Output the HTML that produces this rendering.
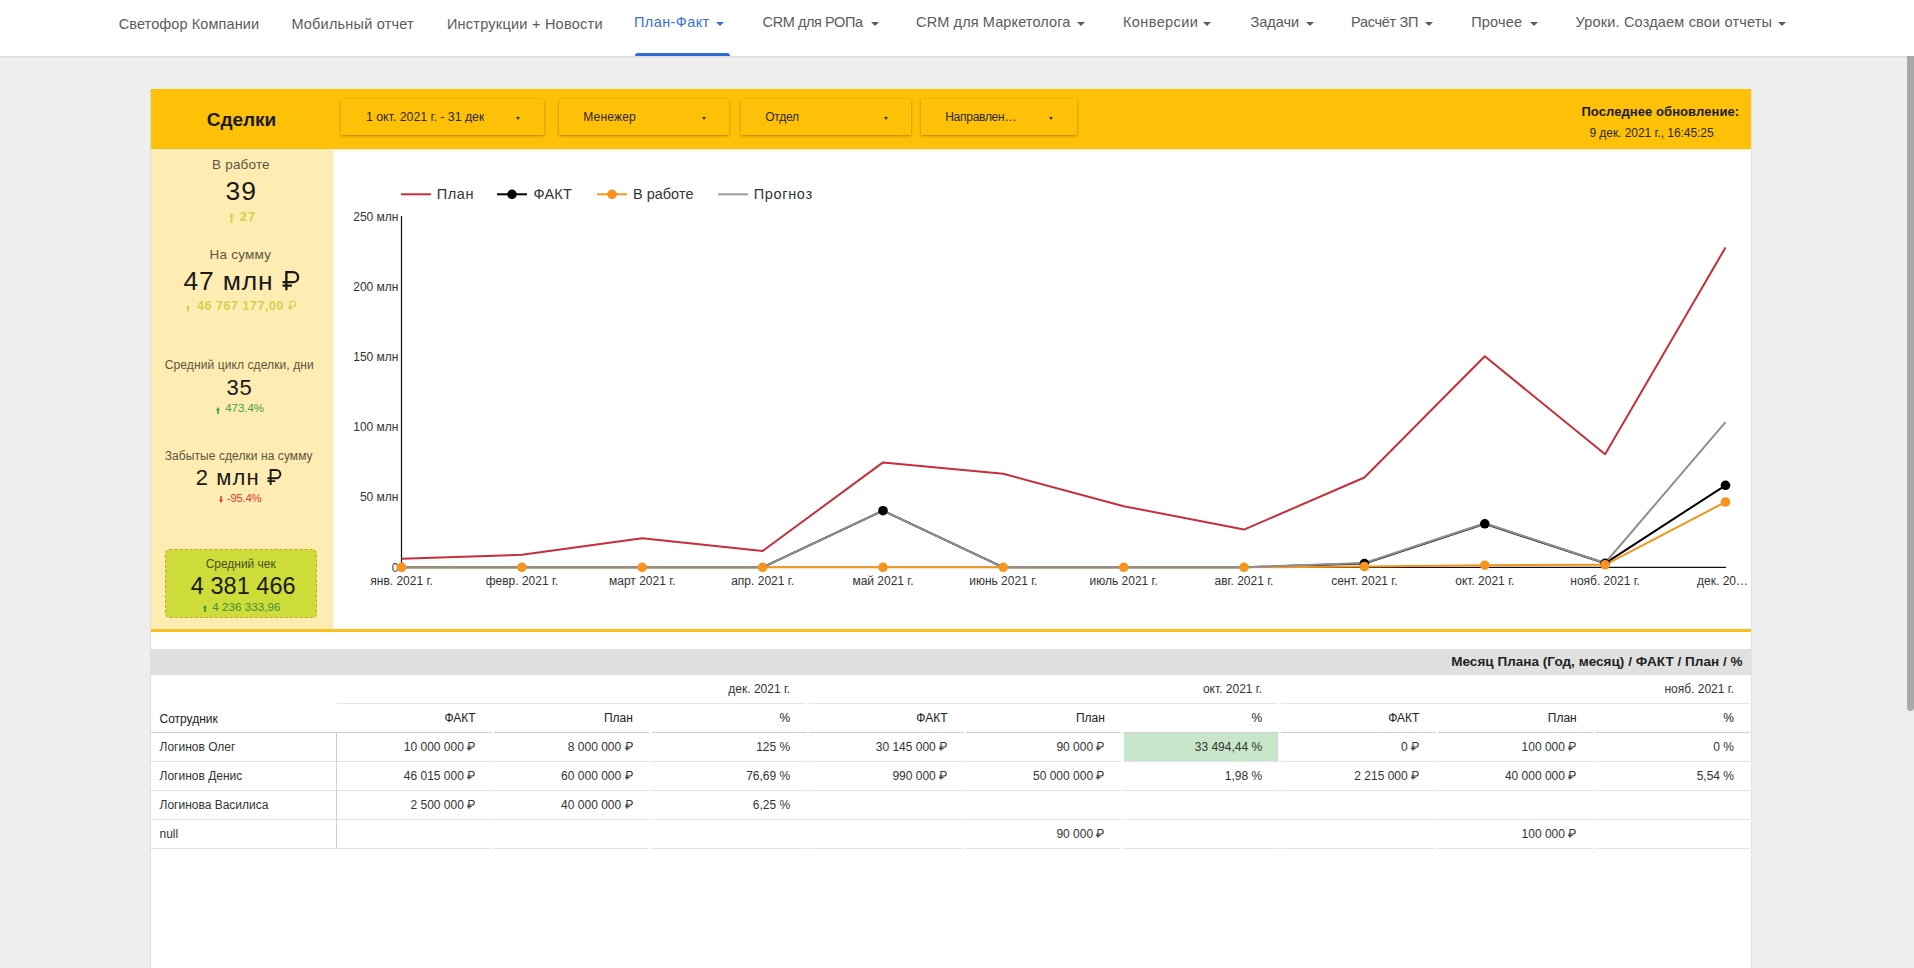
<!DOCTYPE html>
<html><head><meta charset="utf-8"><title>План-Факт</title>
<style>
html,body{margin:0;padding:0;}
body{width:1914px;height:968px;overflow:hidden;position:relative;background:#eeeeee;font-family:"Liberation Sans", sans-serif;}
.t{position:absolute;white-space:nowrap;line-height:1;}
svg text{font-family:"Liberation Sans", sans-serif;}
.caret{position:absolute;width:0;height:0;border-left:4px solid transparent;border-right:4px solid transparent;border-top:4.5px solid #5b5b5b;}
.caret.sm{border-left-width:2.5px;border-right-width:2.5px;border-top-width:3px;border-top-color:#333;}
.rub{display:inline-block;width:0.7em;height:0.729em;vertical-align:baseline;overflow:visible;}

</style></head><body>
<div style="position:absolute;left:0px;top:0px;width:1914px;height:56px;background:#fff;"></div>
<div style="position:absolute;left:0px;top:56px;width:1914px;height:1px;background:#dadada;"></div>
<div style="position:absolute;left:0px;top:57px;width:1914px;height:1px;background:#e6e6e6;"></div>
<div class="t" style="left:118.70px;top:16.63px;font-size:14.5px;color:#5b5b5b;font-weight:normal;letter-spacing:0.098px;">Светофор Компании</div>
<div class="t" style="left:291.40px;top:16.63px;font-size:14.5px;color:#5b5b5b;font-weight:normal;letter-spacing:0.207px;">Мобильный отчет</div>
<div class="t" style="left:446.90px;top:16.63px;font-size:14.5px;color:#5b5b5b;font-weight:normal;letter-spacing:0.243px;">Инструкции + Новости</div>
<div class="t" style="left:634.00px;top:14.73px;font-size:14.5px;color:#3b6fd4;font-weight:normal;letter-spacing:0.403px;">План-Факт</div>
<div class="caret" style="left:716.4px;top:22px;border-top-color:#3b6fd4"></div>
<div class="t" style="left:762.60px;top:14.73px;font-size:14.5px;color:#5b5b5b;font-weight:normal;letter-spacing:-0.419px;">CRM для РОПа</div>
<div class="caret" style="left:871.2px;top:22px;border-top-color:#5b5b5b"></div>
<div class="t" style="left:916.10px;top:14.73px;font-size:14.5px;color:#5b5b5b;font-weight:normal;letter-spacing:0.112px;">CRM для Маркетолога</div>
<div class="caret" style="left:1077.0px;top:22px;border-top-color:#5b5b5b"></div>
<div class="t" style="left:1123.00px;top:14.73px;font-size:14.5px;color:#5b5b5b;font-weight:normal;letter-spacing:0.395px;">Конверсии</div>
<div class="caret" style="left:1203.4px;top:22px;border-top-color:#5b5b5b"></div>
<div class="t" style="left:1250.60px;top:14.73px;font-size:14.5px;color:#5b5b5b;font-weight:normal;letter-spacing:-0.057px;">Задачи</div>
<div class="caret" style="left:1305.5px;top:22px;border-top-color:#5b5b5b"></div>
<div class="t" style="left:1351.00px;top:14.73px;font-size:14.5px;color:#5b5b5b;font-weight:normal;letter-spacing:-0.298px;">Расчёт ЗП</div>
<div class="caret" style="left:1425.0px;top:22px;border-top-color:#5b5b5b"></div>
<div class="t" style="left:1471.20px;top:14.73px;font-size:14.5px;color:#5b5b5b;font-weight:normal;letter-spacing:0.190px;">Прочее</div>
<div class="caret" style="left:1529.5px;top:22px;border-top-color:#5b5b5b"></div>
<div class="t" style="left:1575.60px;top:14.73px;font-size:14.5px;color:#5b5b5b;font-weight:normal;letter-spacing:0.171px;">Уроки. Создаем свои отчеты</div>
<div class="caret" style="left:1777.6px;top:22px;border-top-color:#5b5b5b"></div>
<div style="position:absolute;left:635px;top:53px;width:95px;height:3px;background:#2f6bd8;border-radius:3px 3px 0 0;"></div>
<div style="position:absolute;left:1907px;top:56px;width:7px;height:655px;background:#a9a9a9;border-radius:0 0 4px 4px;"></div>
<div style="position:absolute;left:150px;top:89px;width:1px;height:879px;background:#dcdcdc;"></div>
<div style="position:absolute;left:1751px;top:89px;width:1px;height:879px;background:#e2e2e2;"></div>
<div style="position:absolute;left:151px;top:89px;width:1600px;height:879px;background:#fff;"></div>
<div style="position:absolute;left:151px;top:89px;width:1600px;height:60px;background:#ffc107;"></div>
<div style="position:absolute;left:151px;top:148px;width:1600px;height:1px;background:#eebb20;"></div>
<div style="position:absolute;left:151px;top:149px;width:182px;height:480px;background:#ffecb3;"></div>
<div style="position:absolute;left:333px;top:149px;width:1418px;height:2px;background:#fff6d0;"></div>
<div style="position:absolute;left:151px;top:629px;width:1600px;height:3px;background:#f9bf1d;"></div>
<div class="t" style="left:206.80px;top:109.52px;font-size:19px;color:#1a1a1a;font-weight:bold;letter-spacing:-0.046px;">Сделки</div>
<div style="position:absolute;left:341px;top:99px;width:203px;height:35.5px;background:#ffc107;box-shadow:0 1.2px 2.5px rgba(0,0,0,0.3), 0 0 1px rgba(0,0,0,0.12);"></div>
<div class="t" style="left:366.00px;top:110.59px;font-size:12.3px;color:#2a2a2a;font-weight:normal;width:118.0px;overflow:hidden;">1 окт. 2021 г. - 31 дек</div>
<div class="caret sm" style="left:516.0px;top:117px;"></div>
<div style="position:absolute;left:559px;top:99px;width:170px;height:35.5px;background:#ffc107;box-shadow:0 1.2px 2.5px rgba(0,0,0,0.3), 0 0 1px rgba(0,0,0,0.12);"></div>
<div class="t" style="left:583.30px;top:110.84px;font-size:12px;color:#2a2a2a;font-weight:normal;letter-spacing:0.171px;">Менежер</div>
<div class="caret sm" style="left:701.5px;top:117px;"></div>
<div style="position:absolute;left:741px;top:99px;width:170px;height:35.5px;background:#ffc107;box-shadow:0 1.2px 2.5px rgba(0,0,0,0.3), 0 0 1px rgba(0,0,0,0.12);"></div>
<div class="t" style="left:765.30px;top:110.84px;font-size:12px;color:#2a2a2a;font-weight:normal;letter-spacing:-0.277px;">Отдел</div>
<div class="caret sm" style="left:883.5px;top:117px;"></div>
<div style="position:absolute;left:921px;top:99px;width:156px;height:35.5px;background:#ffc107;box-shadow:0 1.2px 2.5px rgba(0,0,0,0.3), 0 0 1px rgba(0,0,0,0.12);"></div>
<div class="t" style="left:945.20px;top:110.84px;font-size:12px;color:#2a2a2a;font-weight:normal;letter-spacing:-0.265px;">Направлен…</div>
<div class="caret sm" style="left:1049.0px;top:117px;"></div>
<div class="t" style="left:1581.40px;top:105.30px;font-size:13px;color:#1a1a1a;font-weight:bold;letter-spacing:0.079px;">Последнее обновление:</div>
<div class="t" style="left:1589.40px;top:126.54px;font-size:12px;color:#2a2a2a;font-weight:normal;letter-spacing:-0.043px;">9 дек. 2021 г., 16:45:25</div>
<div class="t" style="left:212.10px;top:158.47px;font-size:13.5px;color:#5c5640;font-weight:normal;letter-spacing:0.179px;">В работе</div>
<div class="t" style="left:225.50px;top:178.17px;font-size:26.5px;color:#1a1a1a;font-weight:normal;letter-spacing:1.062px;">39</div>
<div class="t" style="left:239.80px;top:210.00px;font-size:13px;color:#cfd34e;font-weight:bold;letter-spacing:0.870px;">27</div>
<svg style="position:absolute;left:228.5px;top:213px" width="5" height="10" viewBox="0 0 5 10"><path d="M2.5 0 L5 3.5 L3.5 3.5 L3.5 10 L1.5 10 L1.5 3.5 L0 3.5 Z" fill="#cfd34e"/></svg>
<div class="t" style="left:209.50px;top:248.37px;font-size:13.5px;color:#5c5640;font-weight:normal;letter-spacing:0.233px;">На сумму</div>
<div class="t" style="left:183.60px;top:267.97px;font-size:26.5px;color:#1a1a1a;font-weight:normal;letter-spacing:0.769px;">47 млн <svg class="rub" viewBox="0 0 700 729"><path d="M165 0V729M165 42.5H417.5A190 190 0 0 1 417.5 423H20M20 552H375" fill="none" stroke="currentColor" stroke-width="88"/></svg></div>
<div class="t" style="left:196.90px;top:299.62px;font-size:12.5px;color:#cfd34e;font-weight:bold;letter-spacing:0.549px;">46 767 177,00 <svg class="rub" viewBox="0 0 700 729"><path d="M165 0V729M165 42.5H417.5A190 190 0 0 1 417.5 423H20M20 552H375" fill="none" stroke="currentColor" stroke-width="88"/></svg></div>
<svg style="position:absolute;left:186px;top:304.5px" width="4" height="7" viewBox="0 0 4 7"><path d="M2.0 0 L4 3.15 L2.8 3.15 L2.8 7 L1.2 7 L1.2 3.15 L0 3.15 Z" fill="#cfd34e"/></svg>
<div class="t" style="left:164.80px;top:359.34px;font-size:12px;color:#5c5640;font-weight:normal;letter-spacing:0.098px;">Средний цикл сделки, дни</div>
<div class="t" style="left:226.50px;top:376.68px;font-size:22px;color:#1a1a1a;font-weight:normal;letter-spacing:0.665px;">35</div>
<div class="t" style="left:225.20px;top:402.87px;font-size:11.5px;color:#43a047;font-weight:normal;letter-spacing:-0.036px;">473.4%</div>
<svg style="position:absolute;left:216px;top:406.5px" width="4" height="7" viewBox="0 0 4 7"><path d="M2.0 0 L4 3.15 L2.8 3.15 L2.8 7 L1.2 7 L1.2 3.15 L0 3.15 Z" fill="#43a047"/></svg>
<div class="t" style="left:164.80px;top:449.54px;font-size:12px;color:#5c5640;font-weight:normal;letter-spacing:0.070px;">Забытые сделки на сумму</div>
<div class="t" style="left:195.70px;top:467.08px;font-size:22px;color:#1a1a1a;font-weight:normal;letter-spacing:1.138px;">2 млн <svg class="rub" viewBox="0 0 700 729"><path d="M165 0V729M165 42.5H417.5A190 190 0 0 1 417.5 423H20M20 552H375" fill="none" stroke="currentColor" stroke-width="88"/></svg></div>
<div class="t" style="left:226.90px;top:492.87px;font-size:11.5px;color:#e53935;font-weight:normal;letter-spacing:-0.302px;">-95.4%</div>
<svg style="position:absolute;left:218.5px;top:495.5px" width="4" height="7" viewBox="0 0 4 7"><path d="M2.0 7 L4 3.85 L2.8 3.85 L2.8 0 L1.2 0 L1.2 3.85 L0 3.85 Z" fill="#e53935"/></svg>
<svg style="position:absolute;left:165px;top:549px" width="152" height="69"><rect x="0.5" y="0.5" width="151" height="68" rx="4" fill="#cddc39" stroke="#c2a92a" stroke-width="1" stroke-dasharray="3 2"/></svg>
<div class="t" style="left:205.70px;top:558.24px;font-size:12px;color:#4a5020;font-weight:normal;letter-spacing:-0.034px;">Средний чек</div>
<div class="t" style="left:190.80px;top:575.01px;font-size:23.5px;color:#1a1a1a;font-weight:normal;letter-spacing:0.028px;">4 381 466</div>
<div class="t" style="left:212.20px;top:601.87px;font-size:11.5px;color:#3e8e3a;font-weight:normal;letter-spacing:0.104px;">4 236 333,96</div>
<svg style="position:absolute;left:203.4px;top:604.5px" width="4" height="7" viewBox="0 0 4 7"><path d="M2.0 0 L4 3.15 L2.8 3.15 L2.8 7 L1.2 7 L1.2 3.15 L0 3.15 Z" fill="#3e8e3a"/></svg>
<div class="t" style="left:436.80px;top:187.43px;font-size:14.5px;color:#333;font-weight:normal;letter-spacing:0.551px;">План</div>
<div class="t" style="left:533.50px;top:187.43px;font-size:14.5px;color:#333;font-weight:normal;letter-spacing:0.192px;">ФАКТ</div>
<div class="t" style="left:632.90px;top:187.43px;font-size:14.5px;color:#333;font-weight:normal;letter-spacing:0.020px;">В работе</div>
<div class="t" style="left:753.70px;top:187.43px;font-size:14.5px;color:#333;font-weight:normal;letter-spacing:0.659px;">Прогноз</div>
<svg style="position:absolute;left:333px;top:151px" width="1418" height="478" viewBox="333 151 1418 478"><line x1="401.5" y1="216" x2="401.5" y2="567.3" stroke="#111" stroke-width="1.2"/><line x1="401.5" y1="567.3" x2="1726" y2="567.3" stroke="#111" stroke-width="1.2"/><text x="398.5" y="220.6" text-anchor="end" font-size="12" fill="#333">250 млн</text><text x="398.5" y="290.8" text-anchor="end" font-size="12" fill="#333">200 млн</text><text x="398.5" y="361.0" text-anchor="end" font-size="12" fill="#333">150 млн</text><text x="398.5" y="431.2" text-anchor="end" font-size="12" fill="#333">100 млн</text><text x="398.5" y="501.4" text-anchor="end" font-size="12" fill="#333">50 млн</text><text x="398.5" y="571.6" text-anchor="end" font-size="12" fill="#333">0</text><text x="401.5" y="585" text-anchor="middle" font-size="12" fill="#333">янв. 2021 г.</text><text x="521.9" y="585" text-anchor="middle" font-size="12" fill="#333">февр. 2021 г.</text><text x="642.2" y="585" text-anchor="middle" font-size="12" fill="#333">март 2021 г.</text><text x="762.6" y="585" text-anchor="middle" font-size="12" fill="#333">апр. 2021 г.</text><text x="883.0" y="585" text-anchor="middle" font-size="12" fill="#333">май 2021 г.</text><text x="1003.3" y="585" text-anchor="middle" font-size="12" fill="#333">июнь 2021 г.</text><text x="1123.7" y="585" text-anchor="middle" font-size="12" fill="#333">июль 2021 г.</text><text x="1244.0" y="585" text-anchor="middle" font-size="12" fill="#333">авг. 2021 г.</text><text x="1364.4" y="585" text-anchor="middle" font-size="12" fill="#333">сент. 2021 г.</text><text x="1484.8" y="585" text-anchor="middle" font-size="12" fill="#333">окт. 2021 г.</text><text x="1605.1" y="585" text-anchor="middle" font-size="12" fill="#333">нояб. 2021 г.</text><text x="1748" y="585" text-anchor="end" font-size="12" fill="#333">дек. 20…</text><polyline points="401.5,558.7 521.9,554.8 642.2,538.3 762.6,551.0 883.0,462.4 1003.3,473.8 1123.7,506.2 1244.0,529.6 1364.4,477.5 1484.8,356.3 1605.1,454.3 1725.5,247.5" fill="none" stroke="#c62f3a" stroke-width="2" stroke-linejoin="round"/><polyline points="401.5,567.3 521.9,567.3 642.2,567.3 762.6,567.3 883.0,510.7 1003.3,567.3 1123.7,567.3 1244.0,567.3 1364.4,563.6 1484.8,523.8 1605.1,563.3 1725.5,485.3" fill="none" stroke="#000" stroke-width="2" stroke-linejoin="round"/><polyline points="401.5,567.3 521.9,567.3 642.2,567.3 762.6,567.3 883.0,567.3 1003.3,567.3 1123.7,567.3 1244.0,567.3 1364.4,566.5 1484.8,565.2 1605.1,564.8 1725.5,502.0" fill="none" stroke="#f7941d" stroke-width="2" stroke-linejoin="round"/><polyline points="401.5,567.3 521.9,567.3 642.2,567.3 762.6,567.3 883.0,510.7 1003.3,567.3 1123.7,567.3 1244.0,567.3 1364.4,563.0 1484.8,523.3 1605.1,563.0 1725.5,422.2" fill="none" stroke="#8f8f8f" stroke-width="2" stroke-linejoin="round"/><circle cx="883.0" cy="510.7" r="4.8" fill="#000"/><circle cx="1364.4" cy="563.6" r="4.8" fill="#000"/><circle cx="1484.8" cy="523.8" r="4.8" fill="#000"/><circle cx="1605.1" cy="563.3" r="4.8" fill="#000"/><circle cx="1725.5" cy="485.3" r="4.8" fill="#000"/><circle cx="401.5" cy="567.3" r="4.8" fill="#f7941d"/><circle cx="521.9" cy="567.3" r="4.8" fill="#f7941d"/><circle cx="642.2" cy="567.3" r="4.8" fill="#f7941d"/><circle cx="762.6" cy="567.3" r="4.8" fill="#f7941d"/><circle cx="883.0" cy="567.3" r="4.8" fill="#f7941d"/><circle cx="1003.3" cy="567.3" r="4.8" fill="#f7941d"/><circle cx="1123.7" cy="567.3" r="4.8" fill="#f7941d"/><circle cx="1244.0" cy="567.3" r="4.8" fill="#f7941d"/><circle cx="1364.4" cy="566.5" r="4.8" fill="#f7941d"/><circle cx="1484.8" cy="565.2" r="4.8" fill="#f7941d"/><circle cx="1605.1" cy="564.8" r="4.8" fill="#f7941d"/><circle cx="1725.5" cy="502.0" r="4.8" fill="#f7941d"/><line x1="401" y1="194.3" x2="431" y2="194.3" stroke="#c62f3a" stroke-width="2"/><line x1="497" y1="194.3" x2="527" y2="194.3" stroke="#000" stroke-width="2"/><circle cx="512" cy="194.3" r="4.8" fill="#000"/><line x1="597" y1="194.3" x2="627" y2="194.3" stroke="#f7941d" stroke-width="2"/><circle cx="612" cy="194.3" r="4.8" fill="#f7941d"/><line x1="718" y1="194.3" x2="748" y2="194.3" stroke="#9e9e9e" stroke-width="2"/></svg>
<div style="position:absolute;left:151px;top:649px;width:1600px;height:26px;background:#e0e0e0;"></div>
<div class="t" style="left:1451.20px;top:654.77px;font-size:13.5px;color:#1f1f1f;font-weight:bold;letter-spacing:0.037px;">Месяц Плана (Год, месяц) / ФАКТ / План / %</div>
<div style="position:absolute;left:1123.5px;top:732.5px;width:154.6px;height:28.5px;background:#c8e6c9;"></div>
<div style="position:absolute;left:337px;top:703px;width:469px;height:1px;background:#e6e6e6;"></div>
<div style="position:absolute;left:809px;top:703px;width:469px;height:1px;background:#e6e6e6;"></div>
<div style="position:absolute;left:1281px;top:703px;width:469px;height:1px;background:#e6e6e6;"></div>
<div class="t" style="right:1123.80px;top:682.64px;font-size:12px;color:#333;font-weight:normal;">дек. 2021 г.</div>
<div class="t" style="right:651.90px;top:682.64px;font-size:12px;color:#333;font-weight:normal;">окт. 2021 г.</div>
<div class="t" style="right:180.00px;top:682.64px;font-size:12px;color:#333;font-weight:normal;">нояб. 2021 г.</div>
<div class="t" style="left:159.50px;top:712.84px;font-size:12px;color:#222;font-weight:normal;">Сотрудник</div>
<div class="t" style="right:1438.40px;top:711.84px;font-size:12px;color:#222;font-weight:normal;">ФАКТ</div>
<div class="t" style="right:1281.10px;top:711.84px;font-size:12px;color:#222;font-weight:normal;">План</div>
<div class="t" style="right:1123.80px;top:711.84px;font-size:12px;color:#222;font-weight:normal;">%</div>
<div class="t" style="right:966.50px;top:711.84px;font-size:12px;color:#222;font-weight:normal;">ФАКТ</div>
<div class="t" style="right:809.20px;top:711.84px;font-size:12px;color:#222;font-weight:normal;">План</div>
<div class="t" style="right:651.90px;top:711.84px;font-size:12px;color:#222;font-weight:normal;">%</div>
<div class="t" style="right:494.60px;top:711.84px;font-size:12px;color:#222;font-weight:normal;">ФАКТ</div>
<div class="t" style="right:337.30px;top:711.84px;font-size:12px;color:#222;font-weight:normal;">План</div>
<div class="t" style="right:180.00px;top:711.84px;font-size:12px;color:#222;font-weight:normal;">%</div>
<div style="position:absolute;left:151px;top:732px;width:341px;height:1px;background:#cfcfcf;"></div>
<div style="position:absolute;left:494px;top:732px;width:155px;height:1px;background:#cfcfcf;"></div>
<div style="position:absolute;left:652px;top:732px;width:155px;height:1px;background:#cfcfcf;"></div>
<div style="position:absolute;left:809px;top:732px;width:155px;height:1px;background:#cfcfcf;"></div>
<div style="position:absolute;left:966px;top:732px;width:155px;height:1px;background:#cfcfcf;"></div>
<div style="position:absolute;left:1124px;top:732px;width:155px;height:1px;background:#cfcfcf;"></div>
<div style="position:absolute;left:1281px;top:732px;width:155px;height:1px;background:#cfcfcf;"></div>
<div style="position:absolute;left:1438px;top:732px;width:155px;height:1px;background:#cfcfcf;"></div>
<div style="position:absolute;left:1595px;top:732px;width:155px;height:1px;background:#cfcfcf;"></div>
<div style="position:absolute;left:151px;top:761px;width:341px;height:1px;background:#e3e3e3;"></div>
<div style="position:absolute;left:494px;top:761px;width:155px;height:1px;background:#e3e3e3;"></div>
<div style="position:absolute;left:652px;top:761px;width:155px;height:1px;background:#e3e3e3;"></div>
<div style="position:absolute;left:809px;top:761px;width:155px;height:1px;background:#e3e3e3;"></div>
<div style="position:absolute;left:966px;top:761px;width:155px;height:1px;background:#e3e3e3;"></div>
<div style="position:absolute;left:1124px;top:761px;width:155px;height:1px;background:#e3e3e3;"></div>
<div style="position:absolute;left:1281px;top:761px;width:155px;height:1px;background:#e3e3e3;"></div>
<div style="position:absolute;left:1438px;top:761px;width:155px;height:1px;background:#e3e3e3;"></div>
<div style="position:absolute;left:1595px;top:761px;width:155px;height:1px;background:#e3e3e3;"></div>
<div style="position:absolute;left:151px;top:790px;width:341px;height:1px;background:#e3e3e3;"></div>
<div style="position:absolute;left:494px;top:790px;width:155px;height:1px;background:#e3e3e3;"></div>
<div style="position:absolute;left:652px;top:790px;width:155px;height:1px;background:#e3e3e3;"></div>
<div style="position:absolute;left:809px;top:790px;width:155px;height:1px;background:#e3e3e3;"></div>
<div style="position:absolute;left:966px;top:790px;width:155px;height:1px;background:#e3e3e3;"></div>
<div style="position:absolute;left:1124px;top:790px;width:155px;height:1px;background:#e3e3e3;"></div>
<div style="position:absolute;left:1281px;top:790px;width:155px;height:1px;background:#e3e3e3;"></div>
<div style="position:absolute;left:1438px;top:790px;width:155px;height:1px;background:#e3e3e3;"></div>
<div style="position:absolute;left:1595px;top:790px;width:155px;height:1px;background:#e3e3e3;"></div>
<div style="position:absolute;left:151px;top:819px;width:341px;height:1px;background:#e3e3e3;"></div>
<div style="position:absolute;left:494px;top:819px;width:155px;height:1px;background:#e3e3e3;"></div>
<div style="position:absolute;left:652px;top:819px;width:155px;height:1px;background:#e3e3e3;"></div>
<div style="position:absolute;left:809px;top:819px;width:155px;height:1px;background:#e3e3e3;"></div>
<div style="position:absolute;left:966px;top:819px;width:155px;height:1px;background:#e3e3e3;"></div>
<div style="position:absolute;left:1124px;top:819px;width:155px;height:1px;background:#e3e3e3;"></div>
<div style="position:absolute;left:1281px;top:819px;width:155px;height:1px;background:#e3e3e3;"></div>
<div style="position:absolute;left:1438px;top:819px;width:155px;height:1px;background:#e3e3e3;"></div>
<div style="position:absolute;left:1595px;top:819px;width:155px;height:1px;background:#e3e3e3;"></div>
<div style="position:absolute;left:151px;top:848px;width:341px;height:1px;background:#e3e3e3;"></div>
<div style="position:absolute;left:494px;top:848px;width:155px;height:1px;background:#e3e3e3;"></div>
<div style="position:absolute;left:652px;top:848px;width:155px;height:1px;background:#e3e3e3;"></div>
<div style="position:absolute;left:809px;top:848px;width:155px;height:1px;background:#e3e3e3;"></div>
<div style="position:absolute;left:966px;top:848px;width:155px;height:1px;background:#e3e3e3;"></div>
<div style="position:absolute;left:1124px;top:848px;width:155px;height:1px;background:#e3e3e3;"></div>
<div style="position:absolute;left:1281px;top:848px;width:155px;height:1px;background:#e3e3e3;"></div>
<div style="position:absolute;left:1438px;top:848px;width:155px;height:1px;background:#e3e3e3;"></div>
<div style="position:absolute;left:1595px;top:848px;width:155px;height:1px;background:#e3e3e3;"></div>
<div style="position:absolute;left:336px;top:732px;width:1px;height:116px;background:#cfcfcf;"></div>
<div class="t" style="left:159.50px;top:740.84px;font-size:12px;color:#333;font-weight:normal;">Логинов Олег</div>
<div class="t" style="right:1438.40px;top:740.84px;font-size:12px;color:#333;font-weight:normal;">10 000 000 <svg class="rub" viewBox="0 0 700 729"><path d="M165 0V729M165 42.5H417.5A190 190 0 0 1 417.5 423H20M20 552H375" fill="none" stroke="currentColor" stroke-width="88"/></svg></div>
<div class="t" style="right:1281.10px;top:740.84px;font-size:12px;color:#333;font-weight:normal;">8 000 000 <svg class="rub" viewBox="0 0 700 729"><path d="M165 0V729M165 42.5H417.5A190 190 0 0 1 417.5 423H20M20 552H375" fill="none" stroke="currentColor" stroke-width="88"/></svg></div>
<div class="t" style="right:1123.80px;top:740.84px;font-size:12px;color:#333;font-weight:normal;">125 %</div>
<div class="t" style="right:966.50px;top:740.84px;font-size:12px;color:#333;font-weight:normal;">30 145 000 <svg class="rub" viewBox="0 0 700 729"><path d="M165 0V729M165 42.5H417.5A190 190 0 0 1 417.5 423H20M20 552H375" fill="none" stroke="currentColor" stroke-width="88"/></svg></div>
<div class="t" style="right:809.20px;top:740.84px;font-size:12px;color:#333;font-weight:normal;">90 000 <svg class="rub" viewBox="0 0 700 729"><path d="M165 0V729M165 42.5H417.5A190 190 0 0 1 417.5 423H20M20 552H375" fill="none" stroke="currentColor" stroke-width="88"/></svg></div>
<div class="t" style="right:651.90px;top:740.84px;font-size:12px;color:#333;font-weight:normal;">33 494,44 %</div>
<div class="t" style="right:494.60px;top:740.84px;font-size:12px;color:#333;font-weight:normal;">0 <svg class="rub" viewBox="0 0 700 729"><path d="M165 0V729M165 42.5H417.5A190 190 0 0 1 417.5 423H20M20 552H375" fill="none" stroke="currentColor" stroke-width="88"/></svg></div>
<div class="t" style="right:337.30px;top:740.84px;font-size:12px;color:#333;font-weight:normal;">100 000 <svg class="rub" viewBox="0 0 700 729"><path d="M165 0V729M165 42.5H417.5A190 190 0 0 1 417.5 423H20M20 552H375" fill="none" stroke="currentColor" stroke-width="88"/></svg></div>
<div class="t" style="right:180.00px;top:740.84px;font-size:12px;color:#333;font-weight:normal;">0 %</div>
<div class="t" style="left:159.50px;top:769.84px;font-size:12px;color:#333;font-weight:normal;">Логинов Денис</div>
<div class="t" style="right:1438.40px;top:769.84px;font-size:12px;color:#333;font-weight:normal;">46 015 000 <svg class="rub" viewBox="0 0 700 729"><path d="M165 0V729M165 42.5H417.5A190 190 0 0 1 417.5 423H20M20 552H375" fill="none" stroke="currentColor" stroke-width="88"/></svg></div>
<div class="t" style="right:1281.10px;top:769.84px;font-size:12px;color:#333;font-weight:normal;">60 000 000 <svg class="rub" viewBox="0 0 700 729"><path d="M165 0V729M165 42.5H417.5A190 190 0 0 1 417.5 423H20M20 552H375" fill="none" stroke="currentColor" stroke-width="88"/></svg></div>
<div class="t" style="right:1123.80px;top:769.84px;font-size:12px;color:#333;font-weight:normal;">76,69 %</div>
<div class="t" style="right:966.50px;top:769.84px;font-size:12px;color:#333;font-weight:normal;">990 000 <svg class="rub" viewBox="0 0 700 729"><path d="M165 0V729M165 42.5H417.5A190 190 0 0 1 417.5 423H20M20 552H375" fill="none" stroke="currentColor" stroke-width="88"/></svg></div>
<div class="t" style="right:809.20px;top:769.84px;font-size:12px;color:#333;font-weight:normal;">50 000 000 <svg class="rub" viewBox="0 0 700 729"><path d="M165 0V729M165 42.5H417.5A190 190 0 0 1 417.5 423H20M20 552H375" fill="none" stroke="currentColor" stroke-width="88"/></svg></div>
<div class="t" style="right:651.90px;top:769.84px;font-size:12px;color:#333;font-weight:normal;">1,98 %</div>
<div class="t" style="right:494.60px;top:769.84px;font-size:12px;color:#333;font-weight:normal;">2 215 000 <svg class="rub" viewBox="0 0 700 729"><path d="M165 0V729M165 42.5H417.5A190 190 0 0 1 417.5 423H20M20 552H375" fill="none" stroke="currentColor" stroke-width="88"/></svg></div>
<div class="t" style="right:337.30px;top:769.84px;font-size:12px;color:#333;font-weight:normal;">40 000 000 <svg class="rub" viewBox="0 0 700 729"><path d="M165 0V729M165 42.5H417.5A190 190 0 0 1 417.5 423H20M20 552H375" fill="none" stroke="currentColor" stroke-width="88"/></svg></div>
<div class="t" style="right:180.00px;top:769.84px;font-size:12px;color:#333;font-weight:normal;">5,54 %</div>
<div class="t" style="left:159.50px;top:798.84px;font-size:12px;color:#333;font-weight:normal;">Логинова Василиса</div>
<div class="t" style="right:1438.40px;top:798.84px;font-size:12px;color:#333;font-weight:normal;">2 500 000 <svg class="rub" viewBox="0 0 700 729"><path d="M165 0V729M165 42.5H417.5A190 190 0 0 1 417.5 423H20M20 552H375" fill="none" stroke="currentColor" stroke-width="88"/></svg></div>
<div class="t" style="right:1281.10px;top:798.84px;font-size:12px;color:#333;font-weight:normal;">40 000 000 <svg class="rub" viewBox="0 0 700 729"><path d="M165 0V729M165 42.5H417.5A190 190 0 0 1 417.5 423H20M20 552H375" fill="none" stroke="currentColor" stroke-width="88"/></svg></div>
<div class="t" style="right:1123.80px;top:798.84px;font-size:12px;color:#333;font-weight:normal;">6,25 %</div>
<div class="t" style="left:159.50px;top:827.84px;font-size:12px;color:#333;font-weight:normal;">null</div>
<div class="t" style="right:809.20px;top:827.84px;font-size:12px;color:#333;font-weight:normal;">90 000 <svg class="rub" viewBox="0 0 700 729"><path d="M165 0V729M165 42.5H417.5A190 190 0 0 1 417.5 423H20M20 552H375" fill="none" stroke="currentColor" stroke-width="88"/></svg></div>
<div class="t" style="right:337.30px;top:827.84px;font-size:12px;color:#333;font-weight:normal;">100 000 <svg class="rub" viewBox="0 0 700 729"><path d="M165 0V729M165 42.5H417.5A190 190 0 0 1 417.5 423H20M20 552H375" fill="none" stroke="currentColor" stroke-width="88"/></svg></div>
</body></html>
